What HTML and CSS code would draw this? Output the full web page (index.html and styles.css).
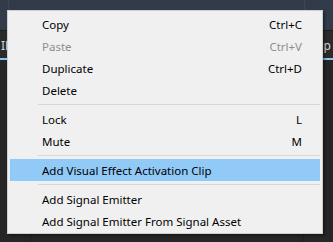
FILE: index.html
```html
<!DOCTYPE html>
<html lang="en">

<head>
  <meta charset="UTF-8">
  <title>Timeline Context Menu</title>
  <link rel="stylesheet" href="styles.css">
</head>

<body>

  <div class="stage">
    <div class="ruler">
      <span class="tick t1"></span>
      <span class="tick t2"></span>
    </div>
    <div class="track">
      <span class="track_label">IE</span>
      <span class="track_label right">p</span>
    </div>
    <div class="track_line"></div>
    <div class="lanes">
      <span class="lane l1"></span>
      <span class="lane l2"></span>
    </div>

    <ul class="menu">
      <li class="menu_item"><span>Copy</span><span class="key">Ctrl+C</span></li>
      <li class="menu_item disabled"><span>Paste</span><span class="key">Ctrl+V</span></li>
      <li class="menu_item"><span>Duplicate</span><span class="key">Ctrl+D</span></li>
      <li class="menu_item"><span>Delete</span></li>
      <li class="menu_sep"></li>
      <li class="menu_item"><span>Lock</span><span class="key">L</span></li>
      <li class="menu_item"><span>Mute</span><span class="key">M</span></li>
      <li class="menu_sep"></li>
      <li class="menu_item active"><span>Add Visual Effect Activation Clip</span></li>
      <li class="menu_sep"></li>
      <li class="menu_item"><span>Add Signal Emitter</span></li>
      <li class="menu_item"><span>Add Signal Emitter From Signal Asset</span></li>
    </ul>
  </div>

</body>

</html>
```

FILE: styles.css
```css
* {
  box-sizing: border-box;
}
body {
  margin: 0;
  background-color: #262626;
  font-family: "Segoe UI", "Noto Sans", sans-serif;
}
.stage {
  position: relative;
  width: 333px;
  height: 242px;
  overflow: hidden;
  display: flex;
  flex-direction: column;
}
.ruler {
  height: 30px;
  background-color: #323b4a;
  display: flex;
}
.tick {
  width: 1px;
  height: 100%;
  background-color: #3c4657;
}
.t1 { margin-left: 8px; }
.t2 { margin-left: 295px; }
.track {
  height: 28px;
  background-color: #2b2b2b;
  border-top: 1px solid #1e1e1e;
  display: flex;
  justify-content: space-between;
  align-items: flex-end;
  padding: 0 2px 4px 1px;
  color: #d8d8d8;
  font-size: 12px;
}
.track_line {
  height: 2px;
  background-color: #86c7ea;
}
.lanes {
  flex: 1;
  display: flex;
  background-color: #262626;
}
.lane {
  width: 1px;
  height: 100%;
  background-color: #1f1f1f;
}
.l1 { margin-left: 30px; }
.l2 { margin-left: 272px; }

.menu {
  position: absolute;
  left: 7px;
  top: 10px;
  width: 316px;
  margin: 0;
  padding: 2px 2px 1px;
  list-style: none;
  background-color: #f0f0f0;
  border: 1px solid #cfcfcf;
  box-shadow: 2px 2px 2px rgba(0, 0, 0, 0.35);
  font-family: "Segoe UI", "Noto Sans", sans-serif;
  font-size: 11.5px;
  color: #000;
}
.menu_item {
  height: 22px;
  display: flex;
  align-items: center;
  justify-content: space-between;
  padding: 0 18px 0 32px;
  white-space: nowrap;
}
.menu_item.disabled {
  color: #8d8d8d;
}
.menu_item.active {
  background-color: #91c9f7;
}
.menu_sep {
  height: 7px;
  margin-left: 28px;
  display: flex;
  align-items: center;
}
.menu_sep::before {
  content: "";
  flex: 1;
  height: 1px;
  background-color: #d7d7d7;
}
```
